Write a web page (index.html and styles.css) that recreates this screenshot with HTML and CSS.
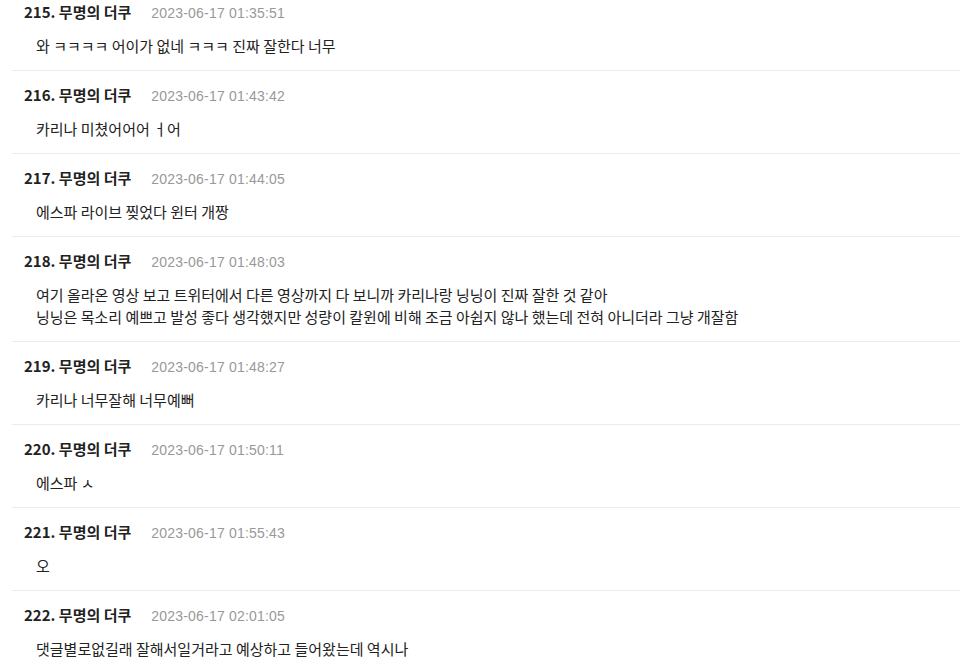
FILE: index.html
```html
<!DOCTYPE html>
<html>

<head>
    <title>comments</title>
    <link rel="stylesheet" href="styles.css">
</head>

<body>
    <ul class="comments">
        <li class="comment">
            <div class="comment-head"><span class="name">215. 무명의 더쿠</span><span class="date">2023-06-17 01:35:51</span></div>
            <p class="comment-body">와 ㅋㅋㅋㅋ 어이가 없네 ㅋㅋㅋ 진짜 잘한다 너무</p>
        </li>
        <li class="comment">
            <div class="comment-head"><span class="name">216. 무명의 더쿠</span><span class="date">2023-06-17 01:43:42</span></div>
            <p class="comment-body">카리나 미쳤어어어 ㅓ어</p>
        </li>
        <li class="comment">
            <div class="comment-head"><span class="name">217. 무명의 더쿠</span><span class="date">2023-06-17 01:44:05</span></div>
            <p class="comment-body">에스파 라이브 찢었다 윈터 개짱</p>
        </li>
        <li class="comment">
            <div class="comment-head"><span class="name">218. 무명의 더쿠</span><span class="date">2023-06-17 01:48:03</span></div>
            <p class="comment-body">여기 올라온 영상 보고 트위터에서 다른 영상까지 다 보니까 카리나랑 닝닝이 진짜 잘한 것 같아<br>닝닝은 목소리 예쁘고 발성 좋다 생각했지만 성량이 칼윈에 비해 조금 아쉽지 않나 했는데 전혀 아니더라 그냥 개잘함</p>
        </li>
        <li class="comment">
            <div class="comment-head"><span class="name">219. 무명의 더쿠</span><span class="date">2023-06-17 01:48:27</span></div>
            <p class="comment-body">카리나 너무잘해 너무예뻐</p>
        </li>
        <li class="comment">
            <div class="comment-head"><span class="name">220. 무명의 더쿠</span><span class="date">2023-06-17 01:50:11</span></div>
            <p class="comment-body">에스파 ㅅ</p>
        </li>
        <li class="comment">
            <div class="comment-head"><span class="name">221. 무명의 더쿠</span><span class="date">2023-06-17 01:55:43</span></div>
            <p class="comment-body">오</p>
        </li>
        <li class="comment">
            <div class="comment-head"><span class="name">222. 무명의 더쿠</span><span class="date">2023-06-17 02:01:05</span></div>
            <p class="comment-body">댓글별로없길래 잘해서일거라고 예상하고 들어왔는데 역시나</p>
        </li>
    </ul>
</body>

</html>
```

FILE: styles.css
```css
body {
    margin: 0;
    background: #fff;
    font-family: "Noto Sans CJK KR", "Noto Sans", sans-serif;
    color: #222;
}

.comments {
    list-style: none;
    margin: -12px 0 0 12px;
    padding: 0;
}

.comment {
    padding: 14px 0 13px 12px;
    border-bottom: 1px solid #ebebeb;
}

.comment-head {
    display: flex;
    align-items: baseline;
    gap: 20px;
    height: 20px;
    line-height: 20px;
}

.name {
    font-size: 15px;
    font-weight: bold;
    color: #222;
}

.date {
    font-family: "Liberation Sans", "Noto Sans CJK KR", sans-serif;
    font-size: 14px;
    letter-spacing: 0.2px;
    color: #999;
}

.comment-body {
    margin: 13px 0 0 12px;
    font-size: 15px;
    line-height: 22px;
    color: #222;
}
```
